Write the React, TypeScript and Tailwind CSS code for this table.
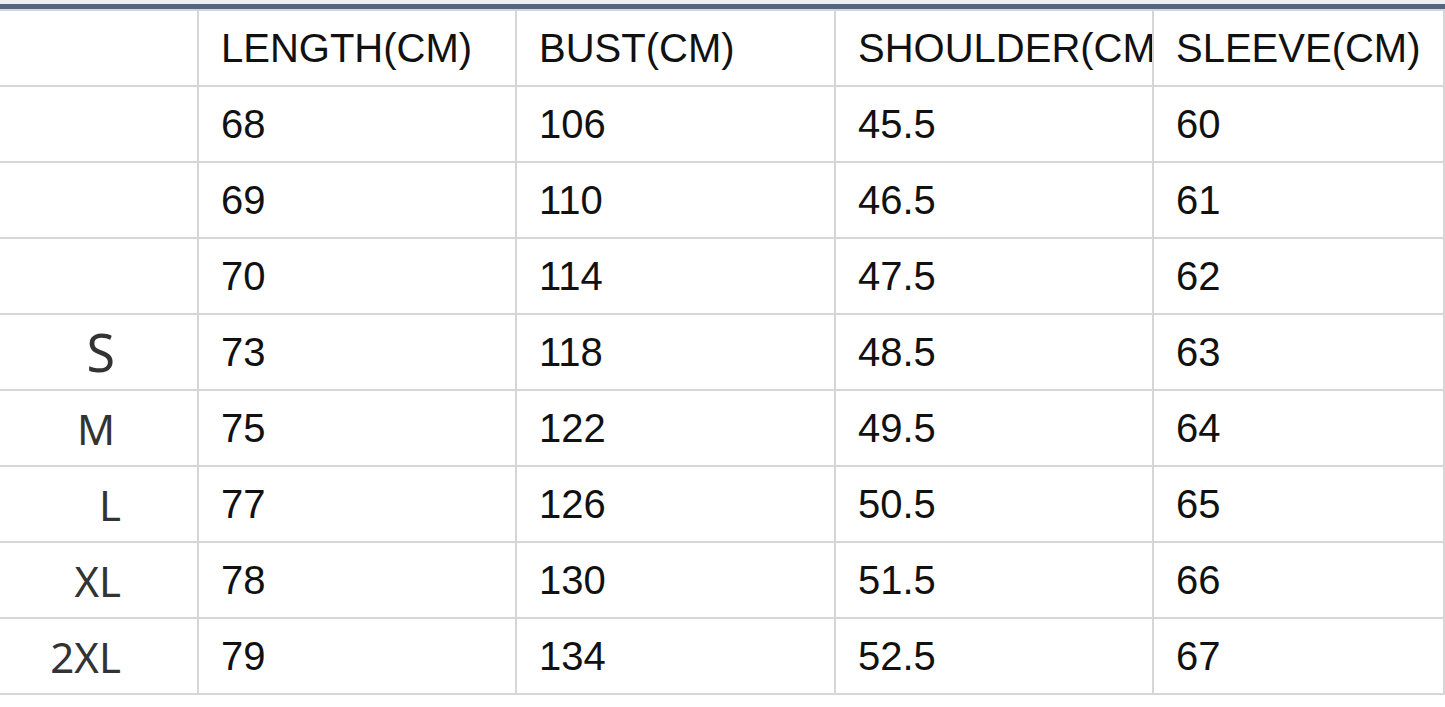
import React from 'react';

const headers = ['LENGTH(CM)', 'BUST(CM)', 'SHOULDER(CM)', 'SLEEVE(CM)'];

const rows: { size: string; values: string[] }[] = [
  { size: '', values: ['68', '106', '45.5', '60'] },
  { size: '', values: ['69', '110', '46.5', '61'] },
  { size: '', values: ['70', '114', '47.5', '62'] },
  { size: 'S', values: ['73', '118', '48.5', '63'] },
  { size: 'M', values: ['75', '122', '49.5', '64'] },
  { size: 'L', values: ['77', '126', '50.5', '65'] },
  { size: 'XL', values: ['78', '130', '51.5', '66'] },
  { size: '2XL', values: ['79', '134', '52.5', '67'] },
];

// right padding of the size label, per label (they are not quite aligned)
const labelPad: Record<string, string> = {
  S: 'pr-[82px] text-[52px]',
  M: 'pr-[82px] text-[42px]',
  L: 'pr-[76px] text-[42px]',
  XL: 'pr-[76px] text-[42px]',
  '2XL': 'pr-[76px] text-[42px]',
};

const cell = 'h-[76px] border-r-2 border-b-2 border-[#d6d6d6] flex items-center overflow-hidden whitespace-nowrap';

const App: React.FC = () => {
  return (
    <div className="w-[1445px] h-[707px] bg-white overflow-hidden">
      {/* Top rule */}
      <div className="h-[4px] bg-[#eceef1]" />
      <div className="h-[5px] bg-[#536580]" />
      <div className="h-[2px] bg-[#d3d7dd]" />

      {/* Size chart */}
      <div
        className="grid grid-cols-[199px_318px_319px_318px_1fr] text-[40px] text-[#111]"
        style={{ fontFamily: '"Liberation Sans", Arial, sans-serif' }}
      >
        <div className={cell} />
        {headers.map((h) => (
          <div key={h} className={`${cell} pl-[22px]`}>
            {h}
          </div>
        ))}

        {rows.map((row, i) => (
          <React.Fragment key={i}>
            <div
              className={`${cell} justify-end text-[#333] ${labelPad[row.size] || ''}`}
              style={{ fontFamily: '"Noto Sans", "Open Sans", sans-serif' }}
            >
              {row.size}
            </div>
            {row.values.map((v, j) => (
              <div key={j} className={`${cell} pl-[22px]`}>
                {v}
              </div>
            ))}
          </React.Fragment>
        ))}
      </div>
    </div>
  );
};

export default App;
